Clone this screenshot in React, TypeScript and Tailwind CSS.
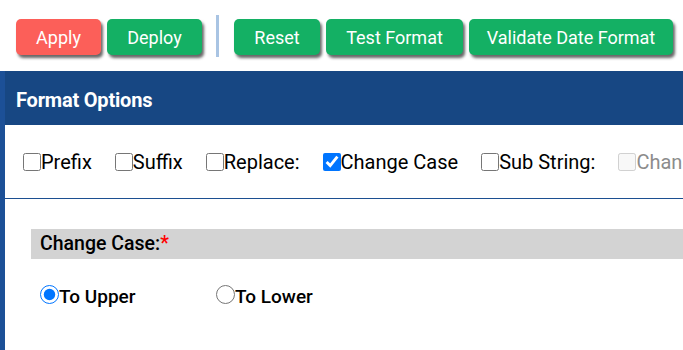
import React from "react";

const Btn = ({ label, red, w }: { label: string; red?: boolean; w: string }) => (
  <button
    className={`h-[36px] ${w} rounded-[5px] text-white text-[18px] font-normal shadow-[2px_3px_3px_rgba(0,0,0,0.6)] ${red ? "bg-[#fc5f59]" : "bg-[#14b064]"}`}
  >
    {label}
  </button>
);

const Check = ({ label, checked, disabled }: { label: string; checked?: boolean; disabled?: boolean }) => (
  <label className={`flex items-center ${disabled ? "text-[#8c8c8c]" : "text-black"}`}>
    <input
      type="checkbox"
      defaultChecked={checked}
      disabled={disabled}
      className="m-0 w-[18px] h-[18px]"
    />
    <span>{label}</span>
  </label>
);

export default function App() {
  return (
    <div className="w-[683px] h-[350px] overflow-hidden bg-white" style={{ fontFamily: "Roboto, 'Liberation Sans', sans-serif" }}>
      <div className="h-[71px] flex items-start pl-[16px]">
        <div className="flex items-center gap-[6px] mt-[19px]">
          <Btn label="Apply" red w="w-[85px]" />
          <Btn label="Deploy" w="w-[95px]" />
        </div>
        <div className="w-[3px] h-[42px] bg-[#a9c4e3] ml-[14px] mr-[15px] mt-[15px]" />
        <div className="flex items-center gap-[6px] mt-[19px]">
          <Btn label="Reset" w="w-[86px]" />
          <Btn label="Test Format" w="w-[137px]" />
          <Btn label="Validate Date Format" w="w-[204px]" />
        </div>
      </div>
      <div className="border-l-[5px] border-[#1c5097] h-[279px]">
        <div className="h-[54px] bg-[#174783] flex items-center pl-[11px] pt-[3px] text-white text-[20px] font-bold tracking-[-0.2px]">
          Format Options
        </div>
        <div className="h-[74px] border-b border-[#1c4f91] flex items-center pl-[18px] gap-[23px] text-[20px] whitespace-nowrap overflow-hidden">
          <Check label="Prefix" />
          <Check label="Suffix" />
          <Check label="Replace:" />
          <Check label="Change Case" checked />
          <Check label="Sub String:" />
          <Check label="Change" disabled />
        </div>
        <div className="pt-[30px] pl-[26px]">
          <div className="h-[30px] bg-[#d3d3d3] flex items-center pl-[9px] text-[19.5px] font-medium text-black">
            Change Case:<span className="text-[#ff0000]">*</span>
          </div>
          <div className="flex items-center mt-[24px] pl-[9px] text-[19px] font-medium text-black">
            <label className="flex items-center w-[176px]">
              <input type="radio" name="cc" defaultChecked className="m-0 mb-[6px] w-[19px] h-[19px]" />
              <span>To Upper</span>
            </label>
            <label className="flex items-center">
              <input type="radio" name="cc" className="m-0 mb-[6px] w-[19px] h-[19px]" />
              <span>To Lower</span>
            </label>
          </div>
        </div>
      </div>
    </div>
  );
}
